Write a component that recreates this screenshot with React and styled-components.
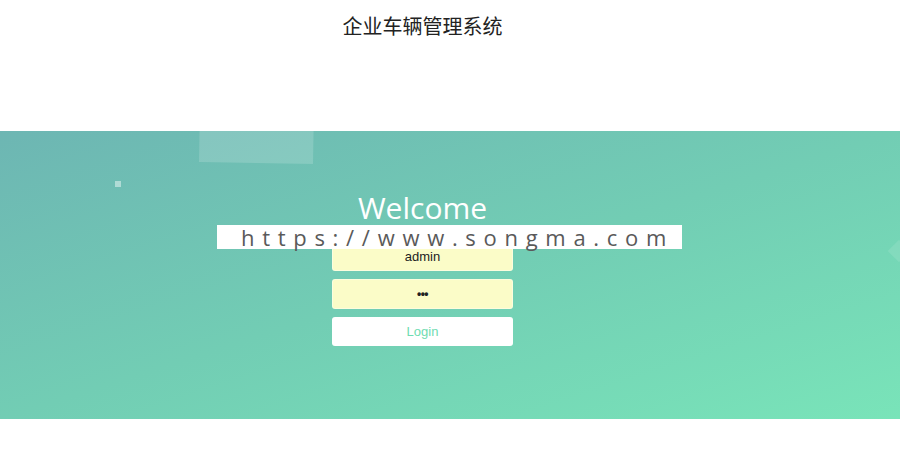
import React from "react";
import styled, { createGlobalStyle } from "styled-components";

const Global = createGlobalStyle`
  html, body { margin: 0; padding: 0; background: #ffffff; }
  body { font-family: "Open Sans", "Noto Sans CJK SC", sans-serif; overflow: hidden; }
  * { box-sizing: border-box; }
`;

const Page = styled.div`
  position: relative;
  width: 900px;
  height: 474px;
  background: #fff;
`;

const Header = styled.div`
  width: 845px;
  height: 131px;
  display: flex;
  justify-content: center;
  padding-top: 12px;
`;

const Title = styled.h2`
  margin: 0;
  font-family: "Noto Sans CJK SC", sans-serif;
  font-weight: 400;
  font-size: 20px;
  line-height: 28px;
  color: #222;
`;

const Band = styled.div`
  position: relative;
  overflow: hidden;
  height: 288px;
  background: linear-gradient(to bottom right, #6db6b3 0%, #72cdb4 50%, #79e4b9 100%);
`;

const Form = styled.div`
  position: relative;
  z-index: 1;
  width: 845px;
  padding-top: 57px;
  display: flex;
  flex-direction: column;
  align-items: center;
`;

const Heading = styled.h1`
  margin: 0 0 13px;
  font-family: "Open Sans", sans-serif;
  font-weight: 400;
  font-size: 30px;
  line-height: 40px;
  color: #fff;
`;

const Field = styled.div`
  width: 181px;
  height: 30px;
  margin-bottom: 8px;
  border: 1px solid rgba(255, 255, 255, 0.4);
  border-radius: 3px;
  background: #fbfcc8;
  display: flex;
  align-items: center;
  justify-content: center;
  font-family: "Liberation Sans", Arial, sans-serif;
  font-size: ${(p) => (p.$dots ? "12px" : "13px")};
  font-weight: ${(p) => (p.$dots ? 700 : 400)};
  color: #222;
  letter-spacing: ${(p) => (p.$dots ? "-0.5px" : "0")};
`;

const Button = styled.div`
  width: 181px;
  height: 29px;
  border-radius: 3px;
  background: #fff;
  display: flex;
  align-items: center;
  justify-content: center;
  font-family: "Liberation Sans", Arial, sans-serif;
  font-size: 13px;
  color: #6fdcb1;
`;

const Bubble = styled.span`
  position: absolute;
  left: ${(p) => p.$x}px;
  top: ${(p) => p.$y}px;
  width: ${(p) => p.$w}px;
  height: ${(p) => p.$h}px;
  background: rgba(255, 255, 255, ${(p) => p.$a});
  transform: rotate(${(p) => p.$r || 0}deg);
`;

const Watermark = styled.div`
  position: absolute;
  left: 217px;
  top: 225px;
  width: 465px;
  height: 24px;
  background: #fff;
  display: flex;
  align-items: center;
  padding-left: 24px;
  font-family: "Open Sans", sans-serif;
  font-size: 22px;
  letter-spacing: 7.7px;
  color: #5a5a5a;
  white-space: nowrap;
  z-index: 5;
`;

export default function App() {
  return (
    <Page>
      <Global />
      <Header>
        <Title>企业车辆管理系统</Title>
      </Header>
      <Band>
        <Bubble $x={200} $y={-82} $w={114} $h={114} $a={0.16} $r={1} />
        <Bubble $x={115} $y={50} $w={6} $h={6} $a={0.45} />
        <Bubble $x={891} $y={112} $w={16} $h={16} $a={0.1} $r={45} />
        <Form>
          <Heading>Welcome</Heading>
          <Field>admin</Field>
          <Field $dots>•••</Field>
          <Button>Login</Button>
        </Form>
      </Band>
      <Watermark>https://www.songma.com</Watermark>
    </Page>
  );
}
